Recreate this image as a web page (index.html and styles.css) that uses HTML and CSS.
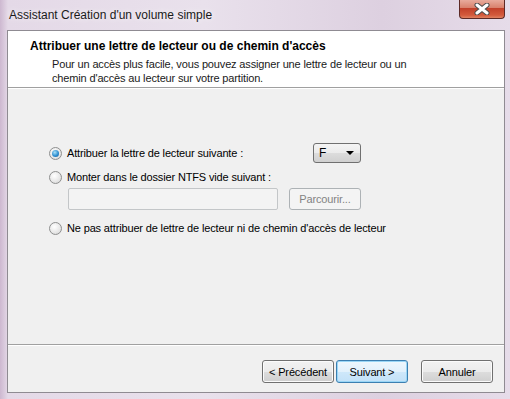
FILE: index.html
```html
<!DOCTYPE html>
<html>

<head>
    <title>Assistant Création d'un volume simple</title>
    <meta charset="utf-8">
    <link rel="stylesheet" href="styles.css">
</head>

<body>
    <div class="window">
        <div class="titlebar">
            <span class="title">Assistant Création d'un volume simple</span>
            <div class="close">
                <svg width="16" height="12" viewBox="0 0 16 12">
                    <path d="M3 2 L13 10 M13 2 L3 10" stroke="#4a4a4a" stroke-width="5" stroke-linecap="round"/>
                    <path d="M3 2 L13 10 M13 2 L3 10" stroke="#ffffff" stroke-width="3" stroke-linecap="round"/>
                </svg>
            </div>
        </div>
        <div class="client">
            <div class="header">
                <div class="header-title">Attribuer une lettre de lecteur ou de chemin d'accès</div>
                <div class="header-text">Pour un accès plus facile, vous pouvez assigner une lettre de lecteur ou un<br>chemin d'accès au lecteur sur votre partition.</div>
            </div>
            <div class="content">
                <div class="row row-drive">
                    <label class="option"><span class="radio checked"></span>Attribuer la lettre de lecteur suivante :</label>
                    <div class="combo"><span>F</span><span class="arrow"></span></div>
                </div>
                <div class="row row-folder">
                    <label class="option"><span class="radio"></span>Monter dans le dossier NTFS vide suivant :</label>
                </div>
                <div class="row row-path">
                    <div class="path-input"></div>
                    <div class="btn disabled">Parcourir...</div>
                </div>
                <div class="row row-none">
                    <label class="option"><span class="radio"></span>Ne pas attribuer de lettre de lecteur ni de chemin d'accès de lecteur</label>
                </div>
            </div>
            <div class="footer">
                <div class="btn">&lt; Précédent</div>
                <div class="btn default">Suivant &gt;</div>
                <div class="btn cancel">Annuler</div>
            </div>
        </div>
    </div>
</body>

</html>
```

FILE: styles.css
```css
html,
body {
    margin: 0;
    padding: 0;
}

body {
    width: 510px;
    height: 399px;
    overflow: hidden;
    font-family: "Liberation Sans", Arial, sans-serif;
    font-size: 11px;
    letter-spacing: -0.15px;
    color: #000;
}

.window {
    display: flex;
    flex-direction: column;
    height: 399px;
    padding: 0 5px 6px 7px;
    box-sizing: border-box;
    background: linear-gradient(90deg, #cdb8d0 0px, #e4d9e7 8px, #e9e1ec 40%, #ddd0e0 75%, #e6dce9 100%);
}

.titlebar {
    display: flex;
    align-items: flex-start;
    height: 30px;
    flex: none;
}

.title {
    padding: 8px 0 0 2px;
    font-size: 12px;
    letter-spacing: 0;
    color: #1a1a1a;
    text-shadow: 0 0 6px #fff;
}

.close {
    display: flex;
    align-items: center;
    justify-content: center;
    margin-left: auto;
    margin-top: -1px;
    width: 44px;
    height: 19px;
    border: 1px solid #5d2a26;
    border-top: none;
    border-radius: 0 0 4px 4px;
    background: linear-gradient(#eab0a2, #d9826d 45%, #c2412a 50%, #d35a3c 85%, #e08262);
}

.client {
    display: flex;
    flex-direction: column;
    flex: 1;
    border: 1px solid #8f8b92;
    background-color: #f0f0f0;
}

.header {
    height: 57px;
    flex: none;
    padding: 8px 0 0 22px;
    box-sizing: border-box;
    background-color: #fff;
    border-bottom: 1px solid #a0a0a0;
    box-shadow: 0 1px 0 #fff;
}

.header-title {
    font-weight: bold;
    font-size: 12px;
    letter-spacing: 0;
    line-height: 14px;
}

.header-text {
    margin-top: 4px;
    padding-left: 22px;
    line-height: 14px;
    color: #1a1a1a;
}

.content {
    flex: 1;
    padding: 55px 0 0 41px;
}

.row {
    display: flex;
    align-items: center;
}

.row-drive {
    width: 312px;
    height: 20px;
    justify-content: space-between;
}

.row-folder {
    margin-top: 7px;
    height: 14px;
}

.row-path {
    margin-top: 4px;
    height: 22px;
    padding-left: 19px;
}

.row-none {
    margin-top: 11px;
    height: 14px;
}

.option {
    display: flex;
    align-items: center;
}

.radio {
    width: 11px;
    height: 11px;
    margin-right: 5px;
    border: 1px solid #8e8f8f;
    border-radius: 50%;
    background: radial-gradient(circle at 40% 35%, #ffffff, #e6e6e6 60%, #cfcfcf);
    position: relative;
}

.radio.checked::after {
    content: "";
    position: absolute;
    left: 2px;
    top: 2px;
    width: 7px;
    height: 7px;
    border-radius: 50%;
    background: radial-gradient(circle at 40% 35%, #a8e0f8, #2f8fd0 55%, #135a98);
}

.combo {
    display: flex;
    align-items: center;
    justify-content: space-between;
    width: 48px;
    height: 20px;
    padding: 0 6px 0 5px;
    box-sizing: border-box;
    border: 1px solid #707070;
    border-radius: 3px;
    background: linear-gradient(#f4f4f4, #ebebeb 50%, #dddddd 50%, #d0d0d0);
    font-size: 12px;
}

.arrow {
    width: 0;
    height: 0;
    border-left: 4px solid transparent;
    border-right: 4px solid transparent;
    border-top: 4px solid #000;
}

.path-input {
    width: 210px;
    height: 22px;
    box-sizing: border-box;
    border: 1px solid #c3c6c8;
    border-radius: 2px;
    background-color: #f3f3f3;
}

.btn {
    display: flex;
    align-items: center;
    justify-content: center;
    width: 72px;
    height: 23px;
    box-sizing: border-box;
    border: 1px solid #707070;
    border-radius: 3px;
    background: linear-gradient(#f2f2f2, #ebebeb 50%, #dddddd 50%, #cfcfcf);
    box-shadow: inset 0 0 0 1px #fbfbfb;
    color: #000;
}

.btn.disabled {
    margin-left: 11px;
    height: 22px;
    border-color: #adb2b5;
    background: #f4f4f4;
    box-shadow: none;
    color: #838383;
}

.btn.default {
    margin-left: 2px;
    border-color: #3c7fb1;
    background: linear-gradient(#eef7fd, #e2f1fc 50%, #cfe8fa 50%, #c2e1f8);
    box-shadow: inset 0 0 0 1px #9ad6f6;
}

.btn.cancel {
    margin-left: 13px;
}

.footer {
    display: flex;
    justify-content: flex-end;
    height: 48px;
    flex: none;
    padding: 15px 11px 0 0;
    box-sizing: border-box;
    border-top: 1px solid #a0a0a0;
    box-shadow: inset 0 1px 0 #fff;
}
```
